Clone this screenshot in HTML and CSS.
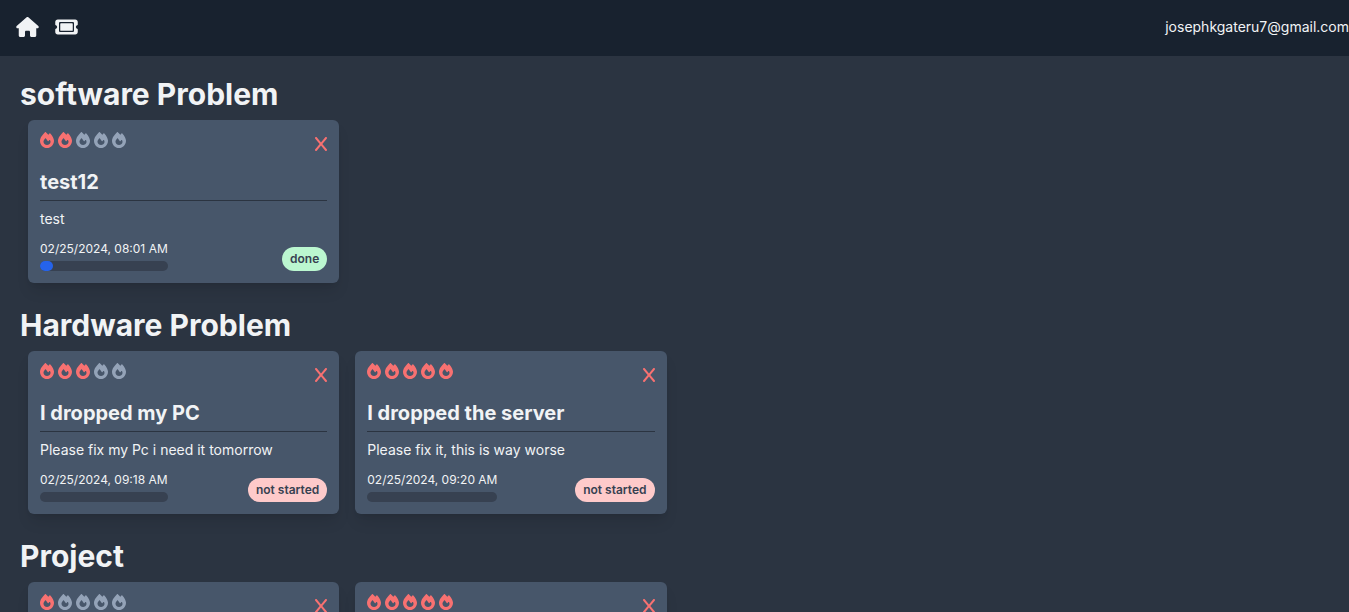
FILE: index.html
```html
<!DOCTYPE html>
<html lang="en">
<head>
<meta charset="utf-8">
<meta name="viewport" content="width=device-width, initial-scale=1">
<title>Tickets</title>
<link rel="stylesheet" href="styles.css">
<script src="tickets.js" defer></script>
</head>
<body>
<svg class="sprite" aria-hidden="true">
  <symbol id="house" viewBox="0 0 576 512"><path d="M575.8 255.5c0 18-15 32.1-32 32.1l-32 0 .7 160.2c0 2.7-.2 5.4-.5 8.1l0 16.2c0 22.1-17.9 40-40 40l-16 0c-1.1 0-2.2 0-3.3-.1c-1.4 .1-2.8 .1-4.2 .1L416 512l-24 0c-22.1 0-40-17.9-40-40l0-24 0-64c0-17.7-14.3-32-32-32l-64 0c-17.7 0-32 14.3-32 32l0 64 0 24c0 22.1-17.9 40-40 40l-24 0-31.9 0c-1.5 0-3-.1-4.5-.2c-1.2 .1-2.4 .2-3.6 .2l-16 0c-22.1 0-40-17.9-40-40l0-112c0-.9 0-1.9 .1-2.8l0-69.7-32 0c-18 0-32-14-32-32.1c0-9 3-17 10-24L266.4 8c7-7 15-8 22-8s15 2 21 7L564.8 231.5c8 7 12 15 11 24z"/></symbol>
  <symbol id="ticket" viewBox="0 0 576 512"><path d="M64 64C28.7 64 0 92.7 0 128v64c0 8.800 7.4 15.700 15.700 18.600C34.500 217.100 48 235 48 256s-13.500 38.900-32.300 45.400C7.400 304.300 0 311.200 0 320v64c0 35.300 28.700 64 64 64H512c35.300 0 64-28.700 64-64V320c0-8.800-7.400-15.700-15.700-18.600C541.500 294.900 528 277 528 256s13.500-38.900 32.300-45.400c8.300-2.900 15.700-9.800 15.700-18.600V128c0-35.300-28.700-64-64-64H64zm64 112l0 160c0 8.800 7.200 16 16 16H432c8.800 0 16-7.200 16-16V176c0-8.800-7.200-16-16-16H144c-8.800 0-16 7.200-16 16zM96 160c0-17.700 14.300-32 32-32H448c17.700 0 32 14.300 32 32V352c0 17.700-14.300 32-32 32H128c-17.700 0-32-14.300-32-32V160z" fill-rule="evenodd"/></symbol>
  <symbol id="fire" viewBox="0 0 448 512"><path d="M159.3 5.4c7.8-7.3 19.9-7.2 27.7 .1c27.6 25.9 53.5 53.8 77.7 84c11-14.4 23.5-30.1 37-42.9c7.9-7.4 20.1-7.4 28 .1c34.6 33 63.9 76.6 84.5 118c20.3 40.8 33.8 82.5 33.8 111.9C448 404.2 348.2 512 224 512C98.4 512 0 404.1 0 276.5c0-38.4 17.8-85.3 45.4-131.7C73.3 97.7 112.7 48.6 159.3 5.4zM225.7 416c25.3 0 47.7-7 68.8-21c42.1-29.4 53.4-88.2 28.1-134.4c-4.5-9-16-9.6-22.5-2l-25.2 29.3c-6.6 7.6-18.5 7.4-24.7-.5c-16.5-21-46-58.5-62.8-79.8c-6.3-8-18.3-8.1-24.7-.1c-33.8 42.500-50.8 69.300-50.8 99.400C112 375.400 162.600 416 225.700 416z"/></symbol>
  <symbol id="x" viewBox="0 0 384 512"><path d="M376.6 84.5c11.3-13.6 9.5-33.8-4.1-45.1s-33.8-9.5-45.1 4.1L192 206 56.6 43.5C45.3 29.9 25.1 28.1 11.5 39.4S-3.9 70.9 7.4 84.5L150.3 256 7.4 427.5c-11.3 13.6-9.5 33.8 4.1 45.1s33.8 9.5 45.1-4.1L192 306 327.4 468.5c11.3 13.6 31.5 15.4 45.1 4.1s15.4-31.5 4.1-45.1L233.7 256 376.6 84.5z"/></symbol>
</svg>
<nav class="nav">
  <div class="nav-links">
    <a href="#" aria-label="Home"><svg class="nav-icon"><use href="#house"/></svg></a>
    <a href="#" aria-label="New ticket"><svg class="nav-icon"><use href="#ticket"/></svg></a>
  </div>
  <p class="email">josephkgateru7@gmail.com</p>
</nav>
<main class="page" id="board"></main>
</body>
</html>
```
FILE: styles.css
```css
* { box-sizing: border-box; margin: 0; padding: 0; }
body {
  background: #2b3441;
  color: #f1f3f5;
  font-family: Inter, "Liberation Sans", sans-serif;
  font-size: 14px;
  line-height: 20px;
}
.sprite { display: none; }
svg { display: block; fill: currentColor; }
a { color: inherit; }

.nav {
  display: flex;
  justify-content: space-between;
  align-items: center;
  height: 56px;
  padding: 0 0 2px 16px;
  background: #18222f;
}
.nav-links { display: flex; gap: 16px; }
.nav-icon { width: 23px; height: 20px; }

.page { padding: 20px; }
.category { margin-bottom: 16px; }
.category-title { font-size: 30px; line-height: 36px; font-weight: 700; }
.grid { display: grid; grid-template-columns: repeat(4, 1fr); }

.card {
  margin: 8px;
  padding: 12px;
  border-radius: 6px;
  background: #47566a;
  box-shadow: 0 10px 15px -3px rgb(0 0 0 / 10%), 0 4px 6px -4px rgb(0 0 0 / 10%);
}
.card-head {
  display: flex;
  justify-content: space-between;
  margin-bottom: 12px;
}
.priority { display: flex; gap: 4px; }
.fire { width: 14px; height: 16px; color: #94a3b8; }
.fire.lit { color: #f87171; }
.delete {
  height: 24px;
  border: 0;
  background: none;
  color: #f87171;
  cursor: pointer;
}
.delete svg { width: 12px; height: 16px; }
.card-title { font-size: 20px; line-height: 28px; font-weight: 700; }
.rule { height: 1px; margin: 4px 0 8px; border: 0; background: #2b3441; }
.card-foot {
  display: flex;
  justify-content: space-between;
  align-items: flex-end;
  margin-top: 12px;
}
.date { font-size: 12px; line-height: 16px; }
.progress {
  height: 10px;
  margin-top: 4px;
  border-radius: 5px;
  background: #374151;
}
.progress-fill { height: 10px; border-radius: 5px; background: #2563eb; }
.status {
  padding: 4px 8px;
  border-radius: 12px;
  background: #fecaca;
  color: #374151;
  font-size: 12px;
  line-height: 16px;
  font-weight: 600;
}
.status.done { background: #bbf7d0; }
```
FILE: tickets.js
```js
const categories = [
  { name: "software Problem", tickets: [
    { priority: 2, title: "test12", text: "test", date: "02/25/2024, 08:01 AM", progress: 10, status: "done" },
  ] },
  { name: "Hardware Problem", tickets: [
    { priority: 3, title: "I dropped my PC", text: "Please fix my Pc i need it tomorrow", date: "02/25/2024, 09:18 AM", progress: 0, status: "not started" },
    { priority: 5, title: "I dropped the server", text: "Please fix it, this is way worse", date: "02/25/2024, 09:20 AM", progress: 0, status: "not started" },
  ] },
  { name: "Project", tickets: [
    { priority: 1 },
    { priority: 5 },
  ] },
];

const fires = (n) => [1, 2, 3, 4, 5]
  .map((i) => `<svg class="fire${i <= n ? " lit" : ""}"><use href="#fire"/></svg>`).join("");

const details = (t) => t.title ? `
  <h3 class="card-title">${t.title}</h3>
  <hr class="rule">
  <p>${t.text}</p>
  <div class="card-foot">
    <div>
      <p class="date">${t.date}</p>
      <div class="progress"><div class="progress-fill" style="width:${t.progress}%"></div></div>
    </div>
    <span class="status ${t.status === "done" ? "done" : ""}">${t.status}</span>
  </div>` : "";

const card = (t) => `
  <article class="card">
    <div class="card-head">
      <div class="priority">${fires(t.priority)}</div>
      <button class="delete" type="button" aria-label="Delete ticket"><svg><use href="#x"/></svg></button>
    </div>${details(t)}
  </article>`;

document.getElementById("board").innerHTML = categories.map((c) => `
  <section class="category">
    <h2 class="category-title">${c.name}</h2>
    <div class="grid">${c.tickets.map(card).join("")}</div>
  </section>`).join("");
```
